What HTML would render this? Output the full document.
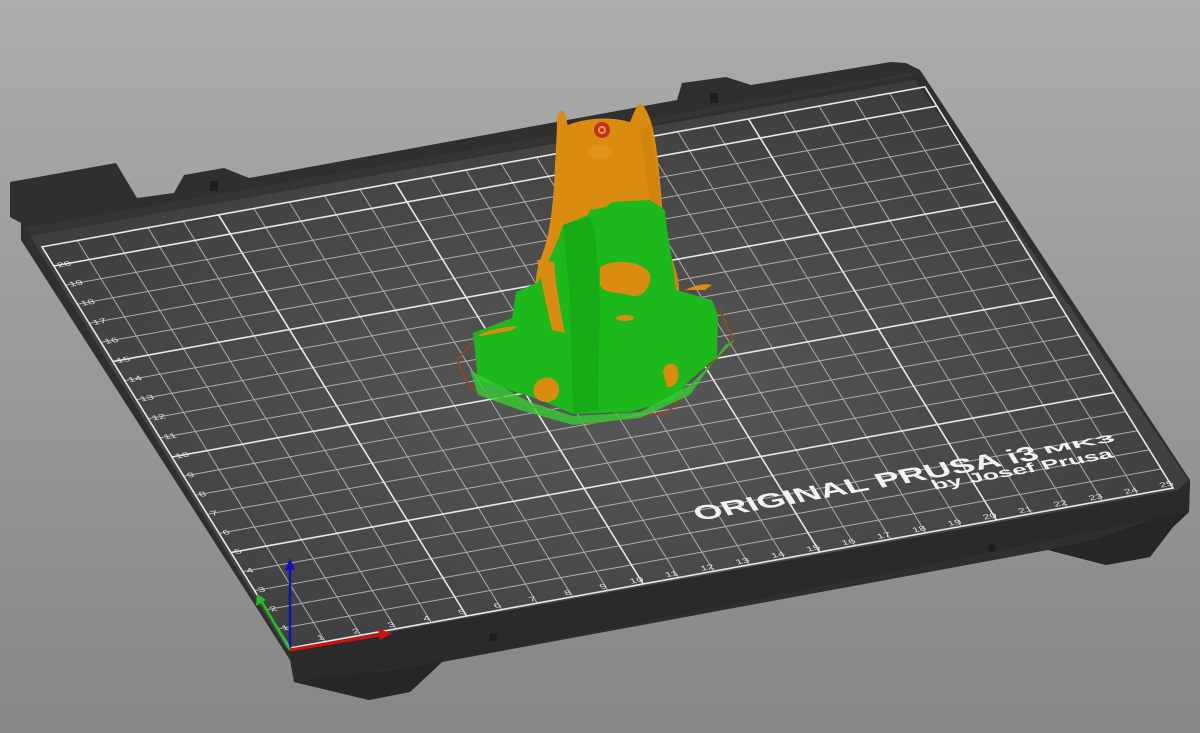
<!DOCTYPE html>
<html><head><meta charset="utf-8"><style>
html,body{margin:0;padding:0;width:1200px;height:733px;overflow:hidden;background:#999}
svg{display:block}
</style></head><body>
<svg width="1200" height="733" viewBox="0 0 1200 733" xmlns="http://www.w3.org/2000/svg">
<defs>
<linearGradient id="bg" x1="0" y1="0" x2="0" y2="1">
<stop offset="0" stop-color="#acacac"/><stop offset="1" stop-color="#868686"/>
</linearGradient>
<radialGradient id="top" cx="0.5" cy="0.55" r="0.6">
<stop offset="0" stop-color="#585858"/><stop offset="1" stop-color="#3c3c3c"/>
</radialGradient>
</defs>
<rect width="1200" height="733" fill="url(#bg)"/>
<polygon fill="#2f2f2f" points="10,182 116,163 137,198 174,193 184,175 224,168 249,178 677,100 682,83 726,77 751,85 891,62 906,63 920,70 1190,480 1189,512 1173,527 1150,557 1106,565 1048,550 442,662 410,692 369,700 294,682 290,660 21,240 21,223 10,217"/>
<polygon fill="#262626" points="1189,512 1173,527 1150,557 1106,565 1048,550 1100,538 1173,512"/>
<polygon fill="#262626" points="294,682 369,700 410,692 442,662 380,672 300,676"/>
<polygon fill="#2a2a2a" points="290,650 1178,490 1190,482 1189,512 442,662 294,682"/>
<polygon fill="#343434" points="24,228 915,72 920,74 40,238"/>
<polygon fill="url(#top)" points="30,236 915,80 1188,480 1178,490 290,650 286,648"/>
<g transform="matrix(3.532,-0.64,1.181,1.91,290,648)" font-family="Liberation Sans, sans-serif">
<path vector-effect="non-scaling-stroke" stroke="#acacac" stroke-width="1" fill="none" d="M10 0V-210M20 0V-210M30 0V-210M40 0V-210M60 0V-210M70 0V-210M80 0V-210M90 0V-210M110 0V-210M120 0V-210M130 0V-210M140 0V-210M160 0V-210M170 0V-210M180 0V-210M190 0V-210M210 0V-210M220 0V-210M230 0V-210M240 0V-210M0 -10H250M0 -20H250M0 -30H250M0 -40H250M0 -60H250M0 -70H250M0 -80H250M0 -90H250M0 -110H250M0 -120H250M0 -130H250M0 -140H250M0 -160H250M0 -170H250M0 -180H250M0 -190H250"/>
<path vector-effect="non-scaling-stroke" stroke="#e8e8e8" stroke-width="1.6" fill="none" d="M0 0V-210H250V0ZM50 0V-210M100 0V-210M150 0V-210M200 0V-210M0 -50H250M0 -100H250M0 -150H250M0 -200H250"/>
<g fill="#ddd" font-size="3.4">
<text x="8.5" y="-1.2">1</text><text x="18.5" y="-1.2">2</text><text x="28.5" y="-1.2">3</text><text x="38.5" y="-1.2">4</text><text x="48.5" y="-1.2">5</text><text x="58.5" y="-1.2">6</text><text x="68.5" y="-1.2">7</text><text x="78.5" y="-1.2">8</text><text x="88.5" y="-1.2">9</text><text x="97" y="-1.2">10</text><text x="107" y="-1.2">11</text><text x="117" y="-1.2">12</text><text x="127" y="-1.2">13</text><text x="137" y="-1.2">14</text><text x="147" y="-1.2">15</text><text x="157" y="-1.2">16</text><text x="167" y="-1.2">17</text><text x="177" y="-1.2">18</text><text x="187" y="-1.2">19</text><text x="197" y="-1.2">20</text><text x="207" y="-1.2">21</text><text x="217" y="-1.2">22</text><text x="227" y="-1.2">23</text><text x="237" y="-1.2">24</text><text x="247" y="-1.2">25</text>
<text x="1" y="-8.8">1</text><text x="1" y="-18.8">2</text><text x="1" y="-28.8">3</text><text x="1" y="-38.8">4</text><text x="1" y="-48.8">5</text><text x="1" y="-58.8">6</text><text x="1" y="-68.8">7</text><text x="1" y="-78.8">8</text><text x="1" y="-88.8">9</text><text x="1" y="-98.8">10</text><text x="1" y="-108.8">11</text><text x="1" y="-118.8">12</text><text x="1" y="-128.8">13</text><text x="1" y="-138.8">14</text><text x="1" y="-148.8">15</text><text x="1" y="-158.8">16</text><text x="1" y="-168.8">17</text><text x="1" y="-178.8">18</text><text x="1" y="-188.8">19</text><text x="1" y="-198.8">20</text>
</g>
<text x="124" y="-25" fill="#f2f2f2" font-weight="bold" font-size="10" textLength="97" lengthAdjust="spacingAndGlyphs">ORIGINAL PRUSA i3</text>
<text x="223" y="-27" fill="#f2f2f2" font-weight="bold" font-size="5" textLength="20" lengthAdjust="spacingAndGlyphs">MK3</text>
<text x="189" y="-19.5" fill="#f2f2f2" font-weight="bold" font-size="6.5" textLength="51" lengthAdjust="spacingAndGlyphs">by Josef Prusa</text>
</g>
<circle cx="493" cy="637" r="4" fill="#1c1c1c"/><circle cx="992" cy="548" r="4" fill="#1c1c1c"/>
<rect x="210" y="181" width="8" height="10" fill="#1e1e1e"/><rect x="710" y="93" width="8" height="10" fill="#1e1e1e"/>
<polygon fill="none" stroke="#8a4a25" stroke-width="2" points="457,360 475,340 560,300 720,310 733,340 667,413 587,423 470,388"/>
<path fill="#d98c10" d="M557,127 C556,115 560,108 564,112 C568,118 566,122 568,125 C585,118 610,116 630,122 C634,112 638,103 641,103 C646,108 650,118 652,125 C658,150 660,180 664,230 C668,255 679,270 679,290 C679,310 665,330 620,338 C580,340 555,335 545,325 C533,305 533,275 542,255 C552,230 554,190 555,165 Z"/>
<path fill="#c97f0a" d="M650,125 C656,160 660,200 665,235 C670,258 678,272 678,292 L660,300 C655,260 650,190 640,130 Z" opacity="0.6"/>
<circle cx="602" cy="130" r="8" fill="#c43020"/><circle cx="602" cy="130" r="4" fill="#e0a030"/><circle cx="602" cy="130" r="2" fill="#c43020"/>
<ellipse cx="600" cy="152" rx="12" ry="7" fill="#e09a25" opacity="0.6"/>
<path fill="#1cb81c" d="M563,225 L588,215 L590,210 L606,207 L612,202 L650,200 L665,210 L667,229 L672,260 L676,290 L712,300 L718,315 L717,357 L690,380 L673,400 L630,412 L573,414 L540,400 L478,380 L473,333 L512,318 L516,292 L538,282 L548,262 L558,240 Z"/>
<path fill="#12a012" d="M563,225 L590,217 L595,233 L600,300 L598,410 L573,414 L570,300 Z" opacity="0.5"/>
<path fill="#35cc35" d="M470,370 L478,395 L520,410 L573,425 L640,418 L690,395 L725,345 L735,340 L690,385 L640,412 L573,416 L530,402 Z" opacity="0.8"/>
<path fill="#d98c10" d="M600,268 C610,258 645,260 650,275 C652,288 640,300 630,295 C620,292 605,295 600,285 Z"/>
<ellipse cx="625" cy="318" rx="9" ry="3" fill="#d98c10"/>
<path fill="#d98c10" d="M534,393 C532,380 545,374 555,380 C562,388 560,400 548,402 C540,402 535,399 534,393 Z"/>
<path fill="#d98c10" d="M663,372 C665,362 675,360 678,370 C680,380 675,388 667,387 Z"/>
<path fill="#d98c10" d="M478,336 C485,330 505,327 518,326 L510,331 C495,333 485,336 478,336 Z"/>
<path fill="#d98c10" d="M685,290 C695,285 705,283 712,285 L705,290 Z"/>
<path fill="#d98c10" d="M537,260 C540,275 545,300 552,330 L565,333 C560,310 556,285 554,262 Z"/>
<line x1="290" y1="650" x2="290" y2="568" stroke="#1010c0" stroke-width="2.5"/>
<polygon points="285,570 295,570 290,558" fill="#1010c0"/>
<line x1="290" y1="650" x2="262" y2="602" stroke="#20c020" stroke-width="2.5"/>
<polygon points="256,606 266,600 257,594" fill="#20c020"/>
<line x1="290" y1="650" x2="380" y2="635" stroke="#d01010" stroke-width="3"/>
<polygon points="378,629 380,640 392,633" fill="#d01010"/>
</svg>
</body></html>
